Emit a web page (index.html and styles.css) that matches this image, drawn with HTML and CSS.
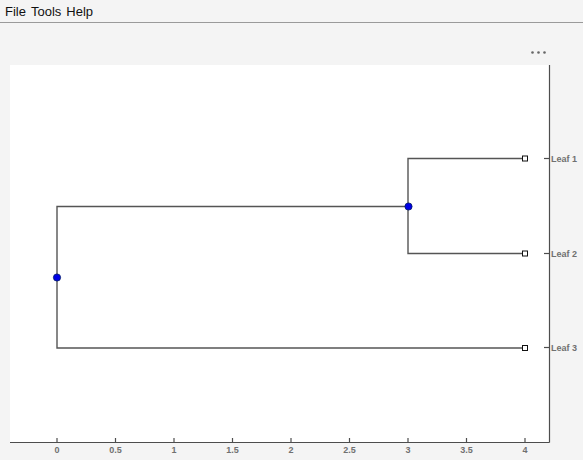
FILE: index.html
```html
<!DOCTYPE html>
<html>
<head>
<meta charset="utf-8">
<link rel="stylesheet" href="styles.css">
</head>
<body>
<div class="menubar">
  <span class="menu-item">File</span>
  <span class="menu-item">Tools</span>
  <span class="menu-item">Help</span>
</div>
<div class="figure">
  <svg class="plot" width="583" height="437" viewBox="0 0 583 437">
    <g class="more" fill="#666">
      <circle cx="532.5" cy="29.5" r="1.3"/>
      <circle cx="538.5" cy="29.5" r="1.3"/>
      <circle cx="544.5" cy="29.5" r="1.3"/>
    </g>
    <rect x="10" y="42" width="539" height="377" fill="#fff"/>
    <g class="axes" stroke="#4d4d4d" stroke-width="1.2" fill="none">
      <line x1="549.5" y1="42" x2="549.5" y2="419.5"/>
      <line x1="10" y1="419.5" x2="549.5" y2="419.5"/>
      <line x1="57" y1="419" x2="57" y2="415"/>
      <line x1="115.5" y1="419" x2="115.5" y2="415"/>
      <line x1="174" y1="419" x2="174" y2="415"/>
      <line x1="232.5" y1="419" x2="232.5" y2="415"/>
      <line x1="291" y1="419" x2="291" y2="415"/>
      <line x1="349.5" y1="419" x2="349.5" y2="415"/>
      <line x1="408" y1="419" x2="408" y2="415"/>
      <line x1="466.5" y1="419" x2="466.5" y2="415"/>
      <line x1="525" y1="419" x2="525" y2="415"/>
      <line x1="544" y1="135.5" x2="549" y2="135.5"/>
      <line x1="544" y1="230.5" x2="549" y2="230.5"/>
      <line x1="544" y1="324.5" x2="549" y2="324.5"/>
    </g>
    <g class="xlabels">
      <text x="57" y="429.5">0</text>
      <text x="115.5" y="429.5">0.5</text>
      <text x="174" y="429.5">1</text>
      <text x="232.5" y="429.5">1.5</text>
      <text x="291" y="429.5">2</text>
      <text x="349.5" y="429.5">2.5</text>
      <text x="408" y="429.5">3</text>
      <text x="466.5" y="429.5">3.5</text>
      <text x="525" y="429.5">4</text>
    </g>
    <g class="ylabels">
      <text x="551" y="138.8">Leaf 1</text>
      <text x="551" y="233.8">Leaf 2</text>
      <text x="551" y="327.8">Leaf 3</text>
    </g>
    <g class="tree" stroke="#555" stroke-width="1.4" fill="none">
      <polyline points="525,325 57,325 57,183.5 408,183.5"/>
      <polyline points="525,135.5 408,135.5 408,230.5 525,230.5"/>
    </g>
    <g class="leaves" fill="#fff" stroke="#111" stroke-width="1">
      <rect x="522.5" y="133" width="5" height="5"/>
      <rect x="522.5" y="228" width="5" height="5"/>
      <rect x="522.5" y="322.5" width="5" height="5"/>
    </g>
    <g class="nodes" fill="#0000e6" stroke="#001a66" stroke-width="0.8">
      <circle cx="57" cy="254.5" r="3.6"/>
      <circle cx="408.5" cy="183.5" r="3.6"/>
    </g>
  </svg>
</div>
</body>
</html>
```
FILE: styles.css
```css
html, body {
  margin: 0;
  padding: 0;
  background: #f4f4f4;
}
body {
  width: 583px;
  height: 460px;
  overflow: hidden;
  font-family: "Liberation Sans", Arial, sans-serif;
}
.menubar {
  height: 22px;
  display: flex;
  align-items: center;
  gap: 5px;
  padding-left: 5px;
  border-bottom: 1px solid #9a9a9a;
  background: #f4f4f4;
  font-size: 13px;
  color: #111;
}
.figure {
  display: block;
}
.plot {
  display: block;
}
.xlabels text {
  font-family: "Liberation Sans", Arial, sans-serif;
  font-size: 9px;
  font-weight: bold;
  fill: #707070;
  text-anchor: middle;
}
.ylabels text {
  font-family: "Liberation Sans", Arial, sans-serif;
  font-size: 9px;
  font-weight: bold;
  fill: #707070;
}
```
